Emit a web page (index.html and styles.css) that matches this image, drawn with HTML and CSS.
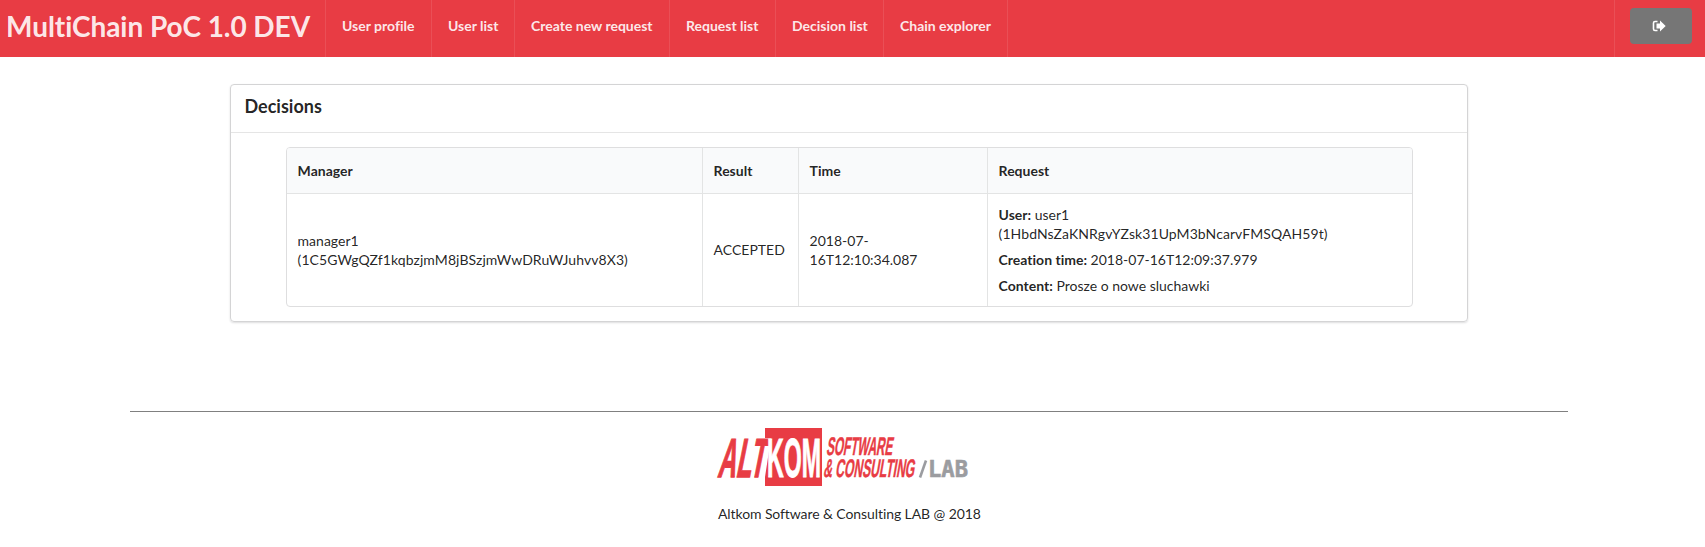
FILE: index.html
```html
<!DOCTYPE html>
<html lang="en">
<head>
<meta charset="utf-8">
<title>MultiChain PoC 1.0 DEV</title>
<link rel="stylesheet" href="styles.css">
</head>
<body>
<nav class="menu">
  <h1 class="brand">MultiChain PoC 1.0 DEV</h1>
  <a class="item profile">User profile</a>
  <a class="item users">User list</a>
  <a class="item create">Create new request</a>
  <a class="item requests">Request list</a>
  <a class="item decisions">Decision list</a>
  <a class="item explorer">Chain explorer</a>
  <div class="right">
    <button class="logout" aria-label="Log out">
      <svg width="14" height="12" viewBox="0 0 14 12"><path d="M5.5 1.5H3Q1.5 1.5 1.5 3V9Q1.5 10.5 3 10.5H5.5" fill="none" stroke="#fff" stroke-width="1.6"/><path d="M4.5 3.6H8V.5L13.7 6 8 11.5V8.4H4.5Z" fill="#fff"/></svg>
    </button>
  </div>
</nav>
<main class="card">
  <h2 class="title">Decisions</h2>
  <div class="content">
    <table class="table">
      <colgroup><col class="c1"><col class="c2"><col class="c3"><col class="c4"></colgroup>
      <thead><tr><th>Manager</th><th>Result</th><th>Time</th><th>Request</th></tr></thead>
      <tbody><tr>
        <td>manager1<br><span class="address">(1C5GWgQZf1kqbzjmM8jBSzjmWwDRuWJuhvv8X3)</span></td>
        <td class="result">ACCEPTED</td>
        <td>2018-07-<br>16T12:10:34.087</td>
        <td>
          <div class="entry"><b>User:</b> user1<br><span class="address">(1HbdNsZaKNRgvYZsk31UpM3bNcarvFMSQAH59t)</span></div>
          <div class="entry"><b>Creation time:</b> 2018-07-16T12:09:37.979</div>
          <div class="entry"><b>Content:</b> Prosze o nowe sluchawki</div>
        </td>
      </tr></tbody>
    </table>
  </div>
</main>
<footer class="footer">
  <div class="inner">
    <svg class="logo" width="262" height="58" viewBox="0 0 262 58">
      <g class="logo-red">
        <text class="heavy" transform="matrix(1 0 -.2 1 0 48.5)" font-size="55" textLength="47" lengthAdjust="spacingAndGlyphs">ALT</text>
        <path d="M48 0H105V58H48V49L54 10H48Z"/>
        <text class="logo-white" x="50" y="48.5" font-size="55" textLength="54" lengthAdjust="spacingAndGlyphs">KOM</text>
        <text class="medium" transform="matrix(1 0 -.17 1 109 27)" font-size="25.5" textLength="66" lengthAdjust="spacingAndGlyphs">SOFTWARE</text>
        <text class="medium" transform="matrix(1 0 -.17 1 106 48.5)" font-size="25.5" textLength="91" lengthAdjust="spacingAndGlyphs">&amp; CONSULTING</text>
      </g>
      <g class="logo-lab">
        <path d="M209 32.5L203 49.5"/>
        <text x="211" y="49" font-size="22.5" textLength="40" lengthAdjust="spacingAndGlyphs">LAB</text>
      </g>
    </svg>
    <p class="copy">Altkom Software &amp; Consulting LAB @ 2018</p>
  </div>
</footer>
</body>
</html>
```
FILE: styles.css
```css
* { box-sizing: border-box; }
body { margin: 0; background: #fff; color: rgba(0,0,0,.87); font: 14px/19px Lato, sans-serif; font-variant-ligatures: none; }
.menu { display: flex; height: 57px; background: #e83c44; color: rgba(255,255,255,.9); }
.brand { width: 326px; margin: 0; padding: 8px 0 0 6px; border-right: 1px solid #ea4f56; font-size: 28px; line-height: 36px; font-weight: 700; letter-spacing: -.05px; white-space: nowrap; }
.item { padding: 16px 0 0 16px; border-right: 1px solid #ea4f56; font-weight: 700; white-space: nowrap; }
.profile { width: 106px; }
.users { width: 83px; }
.create { width: 155px; }
.requests { width: 106px; }
.decisions { width: 108px; }
.explorer { width: 124px; }
.right { width: 91px; margin-left: auto; padding: 8px 0 0 15px; border-left: 1px solid #ea4f56; }
.logout { display: flex; width: 62px; height: 36px; padding: 12px 0 0 22px; border: 0; border-radius: 4px; background: #767676; }
.card { width: 1238px; height: 238px; margin: 27px 0 0 230px; border: 1px solid #d4d4d5; border-radius: 4px; box-shadow: 0 1px 2px rgba(34,36,38,.15); }
.title { height: 48px; margin: 0; padding: 10px 13.5px; border-bottom: 1px solid #e5e5e5; font-size: 18px; line-height: 23px; font-weight: 700; }
.content { padding: 14px 0 0 55px; }
.table { width: 1127px; height: 160px; table-layout: fixed; border: 1px solid #dededf; border-collapse: separate; border-spacing: 0; border-radius: 4px; }
.c1 { width: 415px; }
.c2 { width: 96px; }
.c3 { width: 189px; }
th, td { padding: 0 10px 0 10.6px; border-left: 1px solid #e3e4e4; text-align: left; vertical-align: middle; }
th:first-child, td:first-child { border-left: 0; }
th { height: 46px; background: #f9fafb; border-bottom: 1px solid #e3e4e4; }
th:first-child { border-top-left-radius: 3px; }
th:last-child { border-top-right-radius: 3px; }
.result { padding-bottom: 2px; }
.address { letter-spacing: .08px; }
.entry + .entry { margin-top: 7px; }
.footer { width: 1438px; margin: 89px 0 0 130px; border-top: 1px solid #808080; }
.inner { width: 264px; margin: 16px auto 0; }
.logo { display: block; overflow: visible; font-family: "Liberation Sans", sans-serif; font-weight: 700; }
.logo-red { fill: #e83c44; stroke: none; }
.heavy { stroke: #e83c44; stroke-width: 1.3px; }
.medium { stroke: #e83c44; stroke-width: .5px; }
.logo-white { fill: #fff; stroke: #fff; stroke-width: 1px; }
.logo-lab { fill: #9b9ca0; stroke: #9b9ca0; stroke-width: .6px; font-family: "DejaVu Sans Mono", monospace; }
.logo-lab path { fill: none; stroke-width: 2.6px; }
.copy { margin: 18px 0 0 1px; letter-spacing: -.09px; white-space: nowrap; }
```
